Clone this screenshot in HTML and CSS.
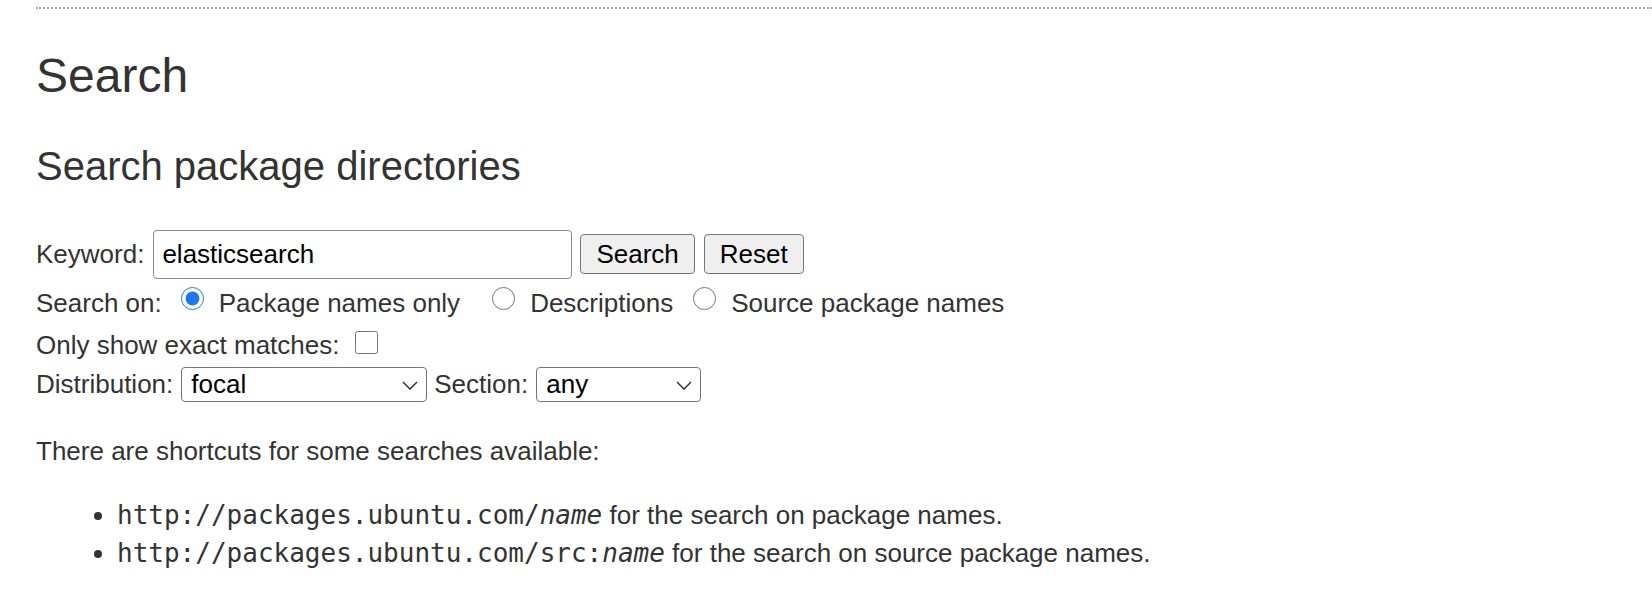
FILE: index.html
```html
<!DOCTYPE html>
<html lang="en">
<head>
  <meta charset="UTF-8">
  <title>Search</title>
  <link rel="stylesheet" href="styles.css">
</head>
<body>
  <div class="page">
    <div class="rule"></div>
    <h1>Search</h1>
    <h2>Search package directories</h2>

    <form class="search-form">
      <div class="row row-keyword">
        <label for="kw">Keyword:</label>
        <input type="text" id="kw" class="keyword" value="elasticsearch">
        <button type="submit" class="btn btn-search">Search</button>
        <button type="reset" class="btn btn-reset">Reset</button>
      </div>

      <div class="row row-searchon">
        <span>Search on:</span>
        <input type="radio" name="searchon" id="names" class="radio first" checked>
        <label for="names" class="opt">Package names only</label>
        <input type="radio" name="searchon" id="all" class="radio second">
        <label for="all" class="opt">Descriptions</label>
        <input type="radio" name="searchon" id="src" class="radio third">
        <label for="src" class="opt">Source package names</label>
      </div>

      <div class="row row-exact">
        <label for="exact">Only show exact matches:</label>
        <input type="checkbox" id="exact" class="check">
      </div>

      <div class="row row-dist">
        <label for="suite">Distribution:</label>
        <div class="select select-suite">
          <select id="suite">
            <option>focal</option>
          </select>
          <svg class="chevron" width="16" height="9" viewBox="0 0 16 9"><path d="M1 1l7 7 7-7" fill="none" stroke="#222" stroke-width="1.3"/></svg>
        </div>
        <label for="section" class="section-label">Section:</label>
        <div class="select select-section">
          <select id="section">
            <option>any</option>
          </select>
          <svg class="chevron" width="16" height="9" viewBox="0 0 16 9"><path d="M1 1l7 7 7-7" fill="none" stroke="#222" stroke-width="1.3"/></svg>
        </div>
      </div>
    </form>

    <p class="note">There are shortcuts for some searches available:</p>
    <ul class="shortcuts">
      <li><code>http://packages.ubuntu.com/<em>name</em></code> for the search on package names.</li>
      <li><code>http://packages.ubuntu.com/src:<em>name</em></code> for the search on source package names.</li>
    </ul>
  </div>
</body>
</html>
```

FILE: styles.css
```css
body {
  margin: 0;
  font-family: "Liberation Sans", Arial, sans-serif;
  font-size: 26px;
  color: #333;
  background: #fff;
}
.page {
  margin-left: 36px;
  padding-top: 7px;
}
.rule {
  border-top: 2px dotted #aaa5a2;
}
h1 {
  font-size: 48px;
  font-weight: normal;
  line-height: 1.2;
  margin: 38px 0 0;
}
h2 {
  font-size: 40px;
  font-weight: normal;
  line-height: 1.2;
  margin: 37px 0 0;
}
.search-form {
  margin-top: 40px;
}
.row {
  display: flex;
  align-items: center;
  line-height: 30px;
  white-space: nowrap;
}
.row-keyword {
  height: 49px;
}
.keyword {
  box-sizing: border-box;
  width: 419px;
  height: 49px;
  margin-left: 9px;
  padding: 0 8px;
  border: 1px solid #8c8c8c;
  border-radius: 4px;
  font-family: inherit;
  font-size: 26px;
  color: #000;
}
.btn {
  box-sizing: border-box;
  height: 40px;
  padding: 0 15px;
  background-color: #efefef;
  border: 1px solid #767676;
  border-radius: 4px;
  font-family: inherit;
  font-size: 26px;
  color: #000;
}
.btn-search {
  margin-left: 8px;
}
.btn-reset {
  margin-left: 9px;
  padding: 0 15px;
}
.row-searchon {
  height: 30px;
  margin-top: 9px;
}
.radio {
  width: 23px;
  height: 23px;
  margin: 0 15px 8px 0;
  accent-color: #1f76f0;
}
.radio.first {
  margin-left: 19px;
}
.radio.second {
  margin-left: 32px;
}
.radio.third {
  margin-left: 20px;
}
.row-exact {
  height: 30px;
  margin-top: 12px;
}
.check {
  width: 23px;
  height: 23px;
  margin: 0 0 5px 16px;
}
.row-dist {
  height: 35px;
  margin-top: 7px;
}
.select {
  position: relative;
  display: flex;
}
.select select {
  appearance: none;
  -webkit-appearance: none;
  box-sizing: border-box;
  height: 35px;
  padding: 0 9px;
  border: 1px solid #767676;
  border-radius: 4px;
  background: #fff;
  font-family: inherit;
  font-size: 26px;
  color: #000;
}
.select-suite {
  margin-left: 8px;
}
.select-suite select {
  width: 246px;
}
.select-section {
  margin-left: 8px;
}
.select-section select {
  width: 165px;
}
.section-label {
  margin-left: 7px;
}
.chevron {
  position: absolute;
  right: 9px;
  top: 14px;
  pointer-events: none;
}
.note {
  margin: 30px 0 0;
  line-height: 38.4px;
}
.shortcuts {
  margin: 25.6px 0 0;
  padding-left: 81px;
  line-height: 38.4px;
}
code {
  font-family: "DejaVu Sans Mono", monospace;
  font-size: 26px;
}
```
